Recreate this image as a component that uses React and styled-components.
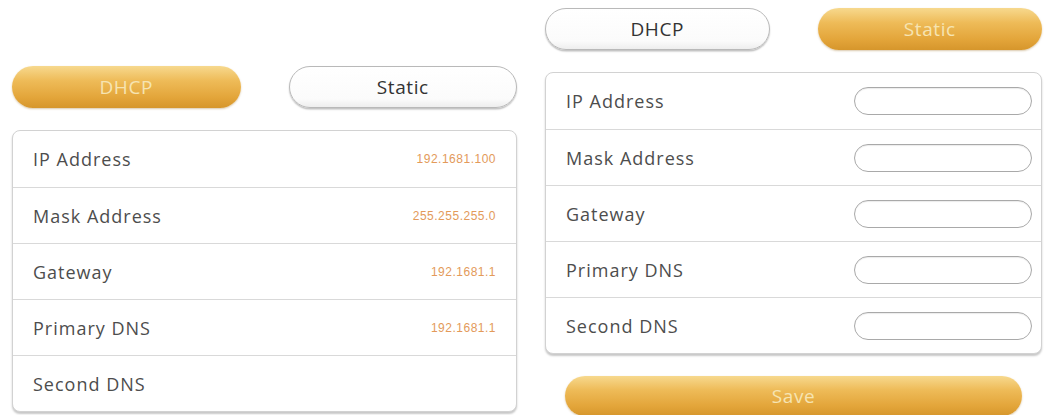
import React from "react";
import styled, { createGlobalStyle } from "styled-components";

const Global = createGlobalStyle`
  html, body { margin: 0; padding: 0; background: #fff; }
  body { font-family: "Open Sans", "Noto Sans", "Liberation Sans", sans-serif; }
`;

const Page = styled.div`
  width: 1045px;
  height: 415px;
  overflow: hidden;
  display: flex;
  align-items: flex-start;
  gap: 28px;
  padding-left: 12px;
  box-sizing: border-box;
  background: #fff;
`;

const Panel = styled.div`
  width: ${(p) => p.$width}px;
  padding-top: ${(p) => p.$top}px;
  display: flex;
  flex-direction: column;
  gap: 22px;
`;

const Tabs = styled.div`
  display: grid;
  grid-template-columns: 1fr 1fr;
  gap: 48px;
`;

const Pill = styled.button`
  height: 42px;
  border-radius: 21px;
  font-family: "Open Sans", "Noto Sans", sans-serif;
  font-size: 19px;
  letter-spacing: 0.6px;
  cursor: pointer;
  padding: 0;
  ${(p) =>
    p.$active
      ? `
    border: none;
    background: linear-gradient(to bottom, #f7d98e 0%, #eebb58 35%, #e3a53a 75%, #d6962c 100%);
    color: #f6e4b2;
    box-shadow: 0 1px 2px rgba(150, 100, 20, 0.35);
  `
      : `
    border: 1.5px solid #b9b9b9;
    background: linear-gradient(to bottom, #ffffff 0%, #fbfbfb 80%, #eeeeee 100%);
    color: #333;
    box-shadow: 0 1.5px 1.5px rgba(0, 0, 0, 0.25);
  `}
`;

const Card = styled.div`
  border: 1px solid #d2d2d2;
  border-radius: 8px;
  box-shadow: 0 2px 2px rgba(0, 0, 0, 0.22);
  background: #fff;
  overflow: hidden;
`;

const Row = styled.div`
  height: 56px;
  display: flex;
  align-items: center;
  justify-content: space-between;
  padding: 0 ${(p) => p.$padRight}px 0 20px;
  box-sizing: border-box;
  & + & {
    border-top: 1.5px solid #d9d9d9;
  }
`;

const Label = styled.span`
  font-size: 18px;
  color: #4d4d4d;
  letter-spacing: 1px;
`;

const Value = styled.span`
  font-family: "Liberation Sans", Arial, sans-serif;
  font-size: 12px;
  letter-spacing: 0.5px;
  color: #e39a5a;
`;

const Input = styled.input`
  width: 178px;
  height: 28px;
  box-sizing: border-box;
  border: 1.5px solid #a9a9a9;
  border-radius: 14px;
  background: #fff;
  box-shadow: inset 0 1px 1px rgba(0, 0, 0, 0.08);
  outline: none;
`;

const SaveRow = styled.div`
  padding: 0 20px;
`;

const SaveButton = styled(Pill)`
  width: 100%;
  height: 40px;
  border-radius: 20px;
`;

const rowsLeft = [
  ["IP Address", "192.1681.100"],
  ["Mask Address", "255.255.255.0"],
  ["Gateway", "192.1681.1"],
  ["Primary DNS", "192.1681.1"],
  ["Second DNS", ""],
];

const rowsRight = ["IP Address", "Mask Address", "Gateway", "Primary DNS", "Second DNS"];

export default function App() {
  return (
    <>
      <Global />
      <Page>
        <Panel $width={505} $top={66}>
          <Tabs>
            <Pill $active>DHCP</Pill>
            <Pill>Static</Pill>
          </Tabs>
          <Card>
            {rowsLeft.map(([l, v]) => (
              <Row key={l} $padRight={20}>
                <Label>{l}</Label>
                {v && <Value>{v}</Value>}
              </Row>
            ))}
          </Card>
        </Panel>
        <Panel $width={497} $top={8}>
          <Tabs>
            <Pill>DHCP</Pill>
            <Pill $active>Static</Pill>
          </Tabs>
          <Card>
            {rowsRight.map((l) => (
              <Row key={l} $padRight={9}>
                <Label>{l}</Label>
                <Input type="text" aria-label={l} />
              </Row>
            ))}
          </Card>
          <SaveRow>
            <SaveButton $active>Save</SaveButton>
          </SaveRow>
        </Panel>
      </Page>
    </>
  );
}
